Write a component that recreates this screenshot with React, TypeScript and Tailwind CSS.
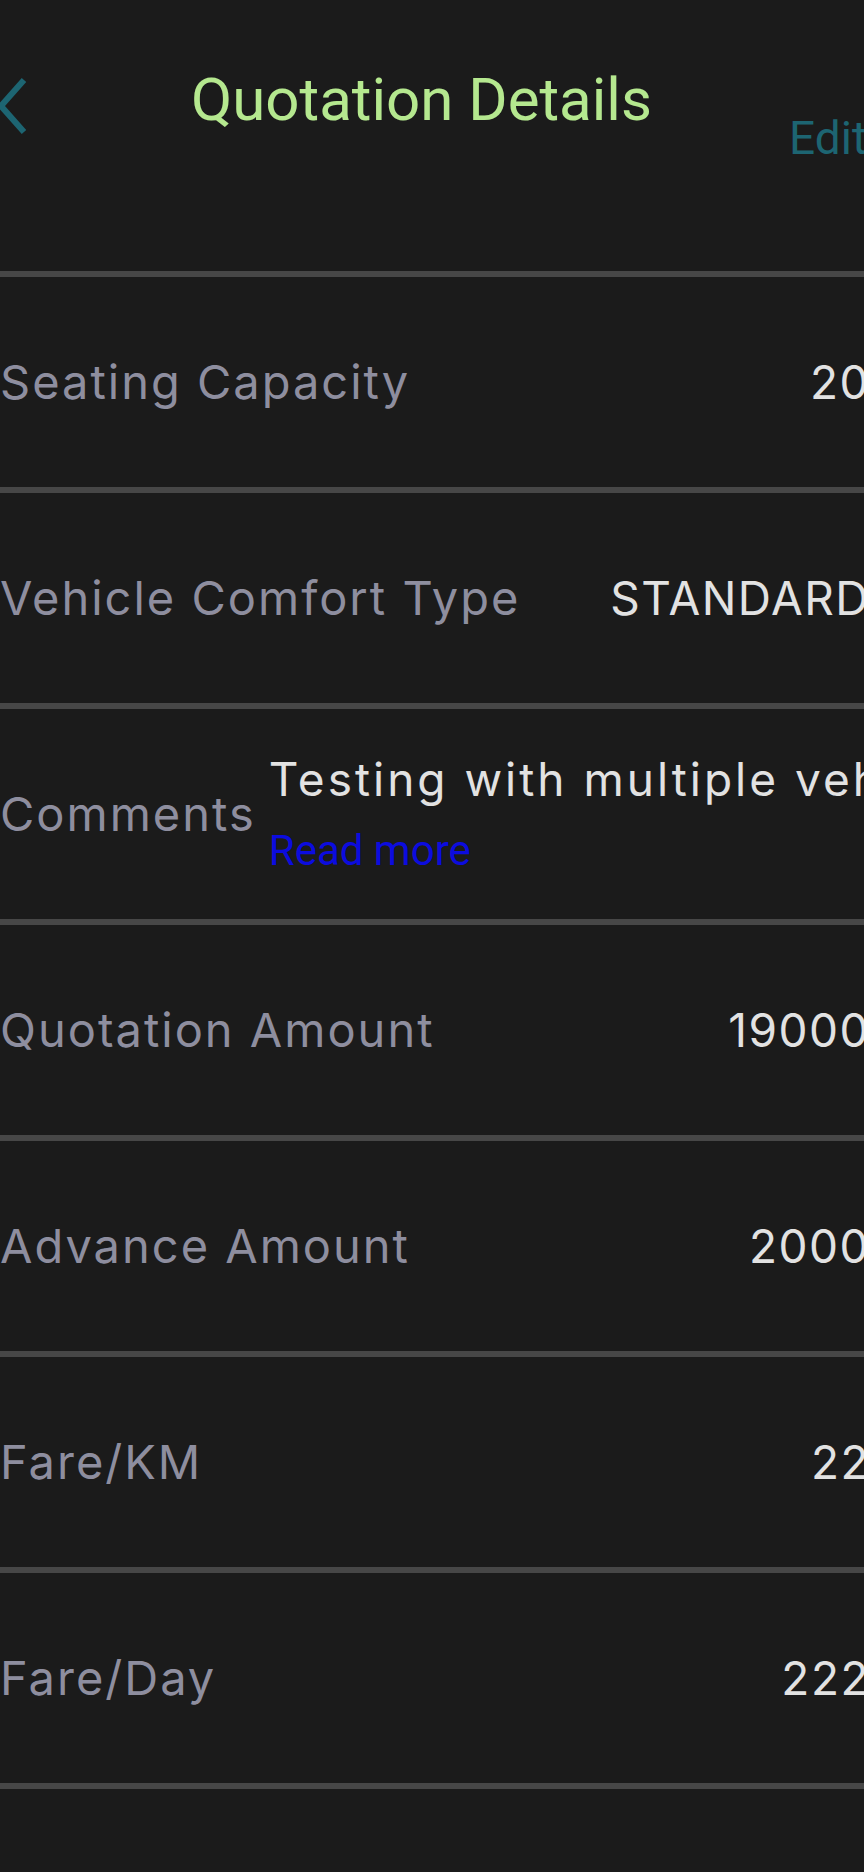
export default function App() {
  const rows = [
    { label: "Seating Capacity", value: "20" },
    { label: "Vehicle Comfort Type", value: "STANDARD" },
    { label: "Comments", value: "Testing with multiple vehicles", comment: true },
    { label: "Quotation Amount", value: "19000" },
    { label: "Advance Amount", value: "2000" },
    { label: "Fare/KM", value: "22" },
    { label: "Fare/Day", value: "222" },
  ];

  return (
    <div className="w-[864px] h-[1872px] overflow-hidden bg-[#1b1b1b] font-['Inter',sans-serif]">
      <div className="flex h-[271px] items-start font-['Roboto',sans-serif]">
        <svg
          className="-ml-[3px] mt-[78px] shrink-0"
          width="30"
          height="56"
          viewBox="0 0 30 56"
          fill="none"
          stroke="#1d6572"
          strokeWidth="6"
        >
          <polyline points="27,2 4,28 27,54" />
        </svg>
        <h1 className="ml-[164px] mt-[65px] text-[60px] leading-[70px] text-[#b5e88f] whitespace-nowrap">
          Quotation Details
        </h1>
        <span className="ml-auto -mr-[3px] mt-[111px] text-[46px] leading-[54px] text-[#1d6572]">
          Edit
        </span>
      </div>

      {rows.map((row) => (
        <div key={row.label}>
          <div className="h-[6px] bg-[#474747]" />
          <div className="flex h-[210px] items-center -mr-[6px]">
            <span className="text-[47px] tracking-[2px] text-[#8e8e9f] whitespace-nowrap">
              {row.label}
            </span>
            {row.comment ? (
              <div className="ml-[13px] flex flex-col whitespace-nowrap overflow-hidden">
                <span className="text-[46px] leading-[58px] tracking-[3px] text-[#e2e2e2]">
                  {row.value}
                </span>
                <span className="mt-[15px] font-['Roboto',sans-serif] text-[42px] leading-[56px] text-[#0c0cdf]">
                  Read more
                </span>
              </div>
            ) : (
              <span className="ml-auto text-[46px] tracking-[1.5px] text-[#e2e2e2] whitespace-nowrap">
                {row.value}
              </span>
            )}
          </div>
        </div>
      ))}
      <div className="h-[6px] bg-[#474747]" />
    </div>
  );
}
